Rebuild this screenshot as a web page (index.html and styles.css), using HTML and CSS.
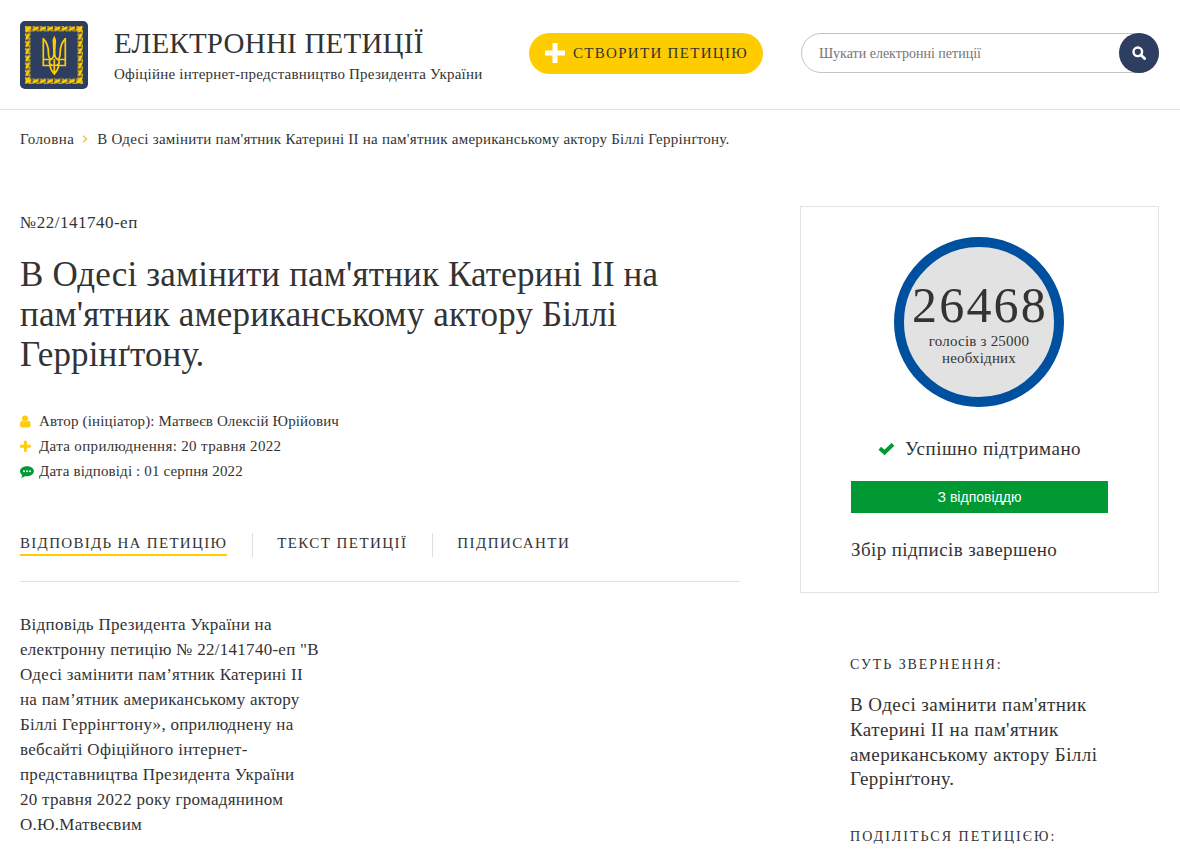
FILE: index.html
```
<!DOCTYPE html>
<html lang="uk">
<head>
  <meta charset="UTF-8" />
  <meta name="viewport" content="width=device-width, initial-scale=1" />
  <title>Електронні петиції</title>
  <link rel="stylesheet" href="styles.css">
</head>
<body>

<header class="header">
  <a class="logo" href="#">
    <svg width="68" height="68" viewBox="0 0 68 68">
      <defs>
        <pattern id="rope" width="7.250" height="5.500" x="5" y="5" patternUnits="userSpaceOnUse">
          <path d="M.3 3.800C2 4 3 1.700 6.300 1.700" fill="none" stroke="#fc0" stroke-width="2.900"/>
          <path d="M4 4.700h3M.3 .8h2.400" stroke="#fc0" stroke-width="1.300"/>
        </pattern>
        <pattern id="ropeSide" width="5.500" height="7.250" x="5" y="5" patternUnits="userSpaceOnUse">
          <path d="M3.800 .3C4 2 1.700 3 1.700 6.300" fill="none" stroke="#fc0" stroke-width="2.900"/>
          <path d="M4.700 4v3M.8 .3v2.400" stroke="#fc0" stroke-width="1.300"/>
        </pattern>
      </defs>
      <rect width="68" height="68" rx="5" fill="#2d3e61"/>
      <!-- rope frame -->
      <rect x="5" y="5" width="58" height="5.500" fill="url(#rope)"/>
      <rect x="5" y="5" width="58" height="5.500" fill="url(#rope)" transform="translate(0 52.500)"/>
      <rect x="5" y="5" width="5.500" height="58" fill="url(#ropeSide)"/>
      <rect x="5" y="5" width="5.500" height="58" fill="url(#ropeSide)" transform="translate(52.500)"/>
      <!-- trident -->
      <g fill="none" stroke="#fc0" stroke-width="1.700">
        <path d="M23.300 17v27.500h6.500M45.300 17v27.500h-6.500"/>
        <path d="M23.300 18c4 3.500 5.200 9 5.200 14.500 0 3 .5 5 2.500 6M45.300 18c-4 3.500-5.200 9-5.200 14.500 0 3-.5 5-2.500 6"/>
        <path d="M23.300 38.500h6.500M45.300 38.500h-6.500"/>
        <path d="M34.300 30c0 5-1 8-4.500 9-1.500 3.500 1 5.500 4.500 5.500s6-2 4.500-5.500c-3.500-1-4.500-4-4.500-9zM34.300 38v14M29.800 43.500c.4 4.500 2.200 7 4.500 9.500 2.300-2.500 4.100-5 4.500-9.500"/>
      </g>
      <path d="M34.300 14.500l1.800 4.500-.8 15h-2l-.8-15z" fill="#fc0"/>
    </svg>
  </a>
  <div class="brand">
    <div class="brand-title">ЕЛЕКТРОННІ ПЕТИЦІЇ</div>
    <div class="brand-sub">Офіційне інтернет-представництво Президента України</div>
  </div>
  <a class="create" href="#">
    <svg width="20" height="20" viewBox="0 0 20 20"><path d="M7.500 0h5v7.500H20v5h-7.500V20h-5v-7.500H0v-5h7.500z" fill="#fff"/></svg>
    <span>СТВОРИТИ ПЕТИЦІЮ</span>
  </a>
  <form class="search">
    <input type="text" placeholder="Шукати електронні петиції" />
    <button type="button" aria-label="Пошук">
      <svg width="14" height="14" viewBox="0 0 14 14" fill="none" stroke="#fff"><circle cx="5.800" cy="5.800" r="4.300" stroke-width="2.400"/><path d="M9 9l3.600 3.600" stroke-width="2.800" stroke-linecap="round"/></svg>
    </button>
  </form>
</header>

<nav class="crumbs">
  <a href="#">Головна</a>
  <svg width="6" height="8" viewBox="0 0 6 8"><path d="M1 .7L4.500 4 1 7.300" fill="none" stroke="#f5c33b" stroke-width="1.400"/></svg>
  <span class="crumb-current">В Одесі замінити пам'ятник Катерині ІІ на пам'ятник американському актору Біллі Геррінґтону.</span>
</nav>

<main class="page">
  <section class="petition">
    <div class="number">№22/141740-еп</div>
    <h1>В Одесі замінити пам'ятник Катерині ІІ на<br>пам'ятник американському актору Біллі<br>Геррінґтону.</h1>

    <ul class="meta">
      <li>
        <svg width="14" height="14" viewBox="0 0 14 14" fill="#fc1"><circle cx="5" cy="3.500" r="3.100"/><path d="M2.300 5.700C0 6 0 8.500 0 10c0 1.500.7 2.500 2 2.500h6.500c1.300 0 2.200-1 2.200-2.500s0-4-2.500-4.300C6.500 7.500 3.500 7.500 2.300 5.700z"/></svg>
        <span>Автор (ініціатор): Матвеєв Олексій Юрійович</span>
      </li>
      <li>
        <svg width="14" height="14" viewBox="0 0 14 14"><path d="M5.400 .7v11M0 6.200h10.800" stroke="#fc1" stroke-width="2.900"/></svg>
        <span class="meta-date">Дата оприлюднення: 20 травня 2022</span>
      </li>
      <li>
        <svg width="14" height="14" viewBox="0 0 14 14"><path d="M7 1.300c3.900 0 6.900 2.200 6.900 5s-3 5-6.900 5c-.7 0-1.300 0-1.900-.2C4 12.200 2.400 12.800.8 12.800c.8-.8 1.300-1.500 1.400-2.800C.8 9 0 7.800 0 6.300c0-2.800 3.100-5 7-5z" fill="#093"/><g fill="#fff"><circle cx="4" cy="6.200" r="1"/><circle cx="7" cy="6.200" r="1"/><circle cx="10" cy="6.200" r="1"/></g></svg>
        <span>Дата відповіді : 01 серпня 2022</span>
      </li>
    </ul>

    <div class="tabs">
      <a class="tab active" href="#"><span>ВІДПОВІДЬ НА ПЕТИЦІЮ</span></a>
      <a class="tab" href="#"><span>ТЕКСТ ПЕТИЦІЇ</span></a>
      <a class="tab" href="#"><span>ПІДПИСАНТИ</span></a>
    </div>

    <p class="answer">Відповідь Президента України на<br>електронну петицію № 22/141740-еп "В<br>Одесі замінити пам’ятник Катерині ІІ<br>на пам’ятник американському актору<br>Біллі Геррінгтону», оприлюднену на<br>вебсайті Офіційного інтернет-<br>представництва Президента України<br>20 травня 2022 року громадянином<br>О.Ю.Матвеєвим</p>
  </section>

  <aside class="side">
    <div class="card">
      <div class="votes">
        <div class="votes-num">26468</div>
        <div class="votes-txt">голосів з 25000<br>необхідних</div>
      </div>
      <div class="success">
        <svg width="17" height="13" viewBox="0 0 17 13"><path d="M1.800 5.200l4.700 4.300L15 1.300" fill="none" stroke="#093" stroke-width="3.900"/></svg>
        <span>Успішно підтримано</span>
      </div>
      <div class="answered">З відповіддю</div>
      <div class="finished">Збір підписів завершено</div>
    </div>
    <div class="about">
      <h2>СУТЬ ЗВЕРНЕННЯ:</h2>
      <p>В Одесі замінити пам'ятник<br>Катерині ІІ на пам'ятник<br>американському актору Біллі<br>Геррінґтону.</p>
      <h2 class="share">ПОДІЛІТЬСЯ ПЕТИЦІЄЮ:</h2>
    </div>
  </aside>
</main>

</body>
</html>
```
FILE: styles.css
```
* {
  box-sizing: border-box;
}
body {
  margin: 0;
  height: 857px;
  overflow: hidden;
  background: #fff;
  color: #333;
  font-family: Georgia, "Liberation Serif", serif;
  font-size: 16px;
  white-space: nowrap;
}
a {
  color: inherit;
  text-decoration: none;
}
svg {
  display: block;
  flex: none;
}

/* header */
.header {
  display: flex;
  height: 110px;
  padding: 21px 21px 0 20px;
  border-bottom: 1px solid #dfdfdf;
}
.logo {
  width: 94px;
}
.brand {
  width: 415px;
}
.brand-title {
  height: 45px;
  line-height: 45px;
  font-size: 29px;
  letter-spacing: .22px;
}
.brand-sub {
  line-height: 16px;
  font-size: 15px;
  letter-spacing: .21px;
}
.create {
  display: flex;
  align-items: center;
  width: 234px;
  height: 41px;
  margin-top: 12px;
  padding: 0 0 1px 16px;
  border-radius: 21px;
  background: #fc0;
  font-size: 15px;
  letter-spacing: 1.3px;
}
.create span {
  margin-left: 8px;
}
.search {
  display: flex;
  width: 358px;
  height: 40px;
  margin: 12px 0 0 38px;
  border: 1px solid #c4c4c4;
  border-radius: 20px;
}
.search input {
  flex: 1;
  min-width: 0;
  padding: 2px 0 0 17px;
  border: none;
  outline: none;
  background: none;
  font: 14px Georgia, "Liberation Serif", serif;
}
.search input::placeholder {
  color: #757575;
}
.search button {
  display: flex;
  align-items: center;
  justify-content: center;
  width: 40px;
  height: 40px;
  margin: -1px -1px 0 0;
  padding: 0;
  border: none;
  border-radius: 50%;
  background: #2d3e61;
}

/* breadcrumbs */
.crumbs {
  display: flex;
  align-items: center;
  height: 20px;
  margin: 19px 20px 0;
  font-size: 15px;
  letter-spacing: .24px;
}
.crumbs a {
  letter-spacing: .4px;
}
.crumbs svg {
  margin: 0 9px 0 8px;
}

/* main columns */
.page {
  display: grid;
  grid-template-columns: 720px 359px;
  column-gap: 60px;
  padding: 57px 20px 0;
}
.number {
  height: 34px;
  line-height: 34px;
  font-size: 17px;
  letter-spacing: .5px;
}
h1 {
  margin: 15px 0 0;
  font-size: 35px;
  font-weight: normal;
  line-height: 40px;
  letter-spacing: .15px;
}
.meta {
  margin: 34px 0 0;
  padding: 0;
  list-style: none;
  font-size: 15px;
  letter-spacing: .15px;
}
.meta li {
  display: flex;
  align-items: center;
  gap: 5px;
  height: 25px;
}
.meta-date {
  letter-spacing: .34px;
}
.tabs {
  display: flex;
  height: 49px;
  margin-top: 49px;
  border-bottom: 1px solid #dfdfdf;
  font-size: 15px;
  letter-spacing: 1.3px;
}
.tab {
  height: 24px;
  margin-right: 24px;
  padding-right: 25px;
  border-right: 1px solid #dfdfdf;
  line-height: 21px;
}
.tab + .tab {
  letter-spacing: 1.42px;
}
.tab:last-child {
  border: none;
}
.tab span {
  display: block;
  height: 23px;
}
.tab.active span {
  border-bottom: 2px solid #fc0;
}
.answer {
  margin: 30px 0 0;
  font-size: 17px;
  line-height: 25px;
  letter-spacing: .27px;
}

/* right column */
.card {
  height: 387px;
  padding: 30px 50px 0;
  border: 1px solid #e3e3e3;
}
.votes {
  width: 170px;
  height: 170px;
  margin: 0 43px;
  padding-top: 32px;
  border: 10px solid #0050a0;
  border-radius: 50%;
  background: #e2e2e2;
  text-align: center;
}
.votes-num {
  display: flex;
  justify-content: center;
  height: 54px;
  padding-left: 2px;
  line-height: 52px;
  font-size: 50px;
  letter-spacing: 2.2px;
}
.votes-txt {
  font-size: 15px;
  line-height: 17px;
  letter-spacing: .2px;
}
.success {
  display: flex;
  align-items: center;
  justify-content: center;
  gap: 10px;
  height: 24px;
  margin-top: 30px;
  font-size: 19px;
  letter-spacing: .48px;
}
.answered {
  height: 32px;
  margin-top: 20px;
  background: #093;
  color: #fff;
  font: 14px/32px Arial, "Liberation Sans", sans-serif;
  text-align: center;
}
.finished {
  margin-top: 25px;
  font-size: 19px;
  line-height: 24px;
  letter-spacing: .4px;
}
.about {
  padding: 62px 0 0 50px;
}
.about h2 {
  margin: 0;
  font-size: 14px;
  font-weight: normal;
  line-height: 20px;
  letter-spacing: 1.9px;
}
.about p {
  margin: 18px 0 0;
  font-size: 19px;
  line-height: 24.8px;
  letter-spacing: .43px;
}
.about .share {
  margin-top: 35px;
  letter-spacing: 2.02px;
}
```
